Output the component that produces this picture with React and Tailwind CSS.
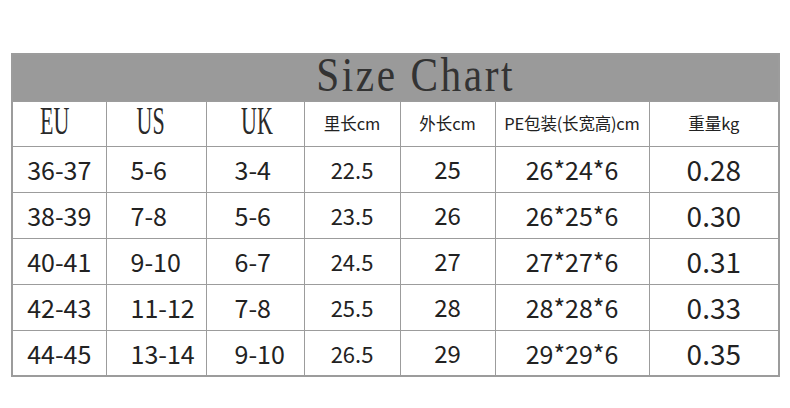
import React from 'react';

const rows = [
  ['36-37', '5-6', '3-4', '22.5', '25', '26*24*6', '0.28'],
  ['38-39', '7-8', '5-6', '23.5', '26', '26*25*6', '0.30'],
  ['40-41', '9-10', '6-7', '24.5', '27', '27*27*6', '0.31'],
  ['42-43', '11-12', '7-8', '25.5', '28', '28*28*6', '0.33'],
  ['44-45', '13-14', '9-10', '26.5', '29', '29*29*6', '0.35'],
];

const serif = "font-['Liberation_Serif',serif]";
const cell = 'border border-[#9c9c9c] p-0';

export default function App() {
  return (
    <div className="w-[790px] h-[408px] bg-white pt-[53px] pl-[11px] font-['Noto_Sans_CJK_SC','Noto_Sans',sans-serif] text-[#222]">
      <table className="table-fixed border-collapse border-2 border-[#9c9c9c] w-[767px]">
        <colgroup>
          <col className="w-[94px]" />
          <col className="w-[100px]" />
          <col className="w-[98px]" />
          <col className="w-[96px]" />
          <col className="w-[95px]" />
          <col className="w-[154px]" />
          <col className="w-[130px]" />
        </colgroup>
        <tbody>
          {/* title bar */}
          <tr className="h-[47px]">
            <td colSpan={7} className="bg-[#9a9a9a] p-0 text-center align-middle h-[47px] leading-[30px]">
              <span className={`inline-block ${serif} text-[48px] leading-[30px] text-[#333] scale-x-[0.86] tracking-[3px] translate-x-[20px] translate-y-[2px]`}>
                Size Chart
              </span>
            </td>
          </tr>
          <tr className="h-[45px]">
            {['EU', 'US', 'UK'].map((h, i) => (
              <td key={h} className={`${cell} text-center align-middle h-[45px] leading-[30px]`}>
                <span
                  className={`inline-block ${serif} text-[40px] leading-[30px] scale-x-[0.55] text-[#2a2a2a] ${
                    i === 0 ? '-translate-x-[5px]' : i === 1 ? '-translate-x-[5px]' : 'translate-x-[2px]'
                  }`}
                >
                  {h}
                </span>
              </td>
            ))}
            <td className={`${cell} text-center text-[16.5px]`}>里长cm</td>
            <td className={`${cell} text-center text-[16.5px]`}>外长cm</td>
            <td className={`${cell} text-center text-[16.5px] whitespace-nowrap tracking-[-0.2px]`}>PE包装(长宽高)cm</td>
            <td className={`${cell} text-center text-[16.5px]`}>重量kg</td>
          </tr>
          {rows.map((r) => (
            <tr key={r[0]} className="h-[46px] leading-[30px]">
              <td className={`${cell} text-center text-[25px]`}>{r[0]}</td>
              <td className={`${cell} pl-[24px] text-[25px]`}>{r[1]}</td>
              <td className={`${cell} pl-[28px] text-[25px]`}>{r[2]}</td>
              <td className={`${cell} text-center text-[22px]`}>{r[3]}</td>
              <td className={`${cell} text-center text-[24px]`}>{r[4]}</td>
              <td className={`${cell} text-center text-[25px]`}>{r[5]}</td>
              <td className={`${cell} text-center text-[28px]`}>{r[6]}</td>
            </tr>
          ))}
        </tbody>
      </table>
    </div>
  );
}
